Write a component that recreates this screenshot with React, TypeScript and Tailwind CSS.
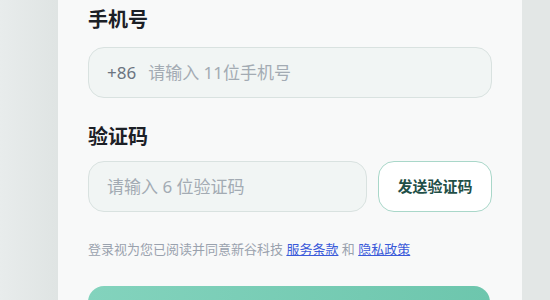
export default function App() {
  return (
    <div className="flex h-[300px] w-[550px] overflow-hidden bg-[#e4e8e7] font-['Noto_Sans','Noto_Sans_CJK_SC',sans-serif]">
      <div className="w-[58px] shrink-0 bg-gradient-to-r from-[#e8ecec] to-[#dfe4e3]" />
      <div className="w-[464px] shrink-0 bg-[#f8f9f9] px-[30px] pt-[6px]">
        {/* Phone */}
        <div className="h-[28px] text-[20px] leading-[28px] font-bold text-[#1c2026]">手机号</div>
        <div className="mt-[13px] flex h-[51px] w-[404px] items-center rounded-[16px] border border-[#d9e2e0] bg-[#f1f5f4] pl-[18px]">
          <span className="text-[17px] text-[#6b7480]">+86</span>
          <span className="ml-[12px] text-[17px] text-[#a3abb3]">请输入 11位手机号</span>
        </div>

        {/* Code */}
        <div className="mt-[25px] h-[28px] text-[20px] leading-[28px] font-bold text-[#1c2026]">验证码</div>
        <div className="mt-[10px] flex gap-[11px]">
          <div className="flex h-[51px] w-[279px] items-center rounded-[16px] border border-[#d9e2e0] bg-[#f1f5f4] pl-[18px]">
            <span className="text-[17px] text-[#a3abb3]">请输入 6 位验证码</span>
          </div>
          <button className="flex h-[51px] w-[114px] items-center justify-center rounded-[16px] border border-[#a9d7c9] bg-white text-[15px] font-bold text-[#1f4f47]">
            发送验证码
          </button>
        </div>

        {/* Terms */}
        <p className="mt-[27px] text-[13px] leading-[20px] text-[#9aa2ae]">
          登录视为您已阅读并同意新谷科技{' '}
          <a className="text-[#3a5ad9] underline">服务条款</a> 和{' '}
          <a className="text-[#3a5ad9] underline">隐私政策</a>
        </p>

        <button className="mt-[27px] h-[48px] w-[402px] rounded-[16px] bg-gradient-to-r from-[#83d3bd] to-[#6dc6ad]" />
      </div>
      <div className="flex-1 bg-[#e3e7e6]" />
    </div>
  );
}
